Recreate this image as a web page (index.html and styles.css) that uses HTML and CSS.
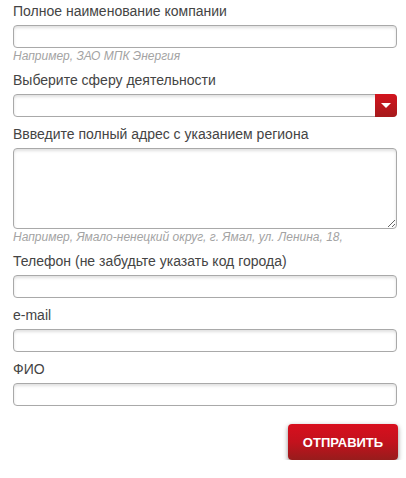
FILE: index.html
```html
<!DOCTYPE html>
<html lang="ru">
<head>
  <meta charset="UTF-8" />
  <title>Заявка</title>
  <link rel="stylesheet" href="styles.css">
</head>
<body>
  <form class="form">
    <div class="field">
      <label class="label">Полное наименование компании</label>
      <input class="input" type="text">
      <div class="hint">Например, ЗАО МПК Энергия</div>
    </div>

    <div class="field">
      <label class="label">Выберите сферу деятельности</label>
      <div class="select">
        <span class="select-arrow"></span>
      </div>
    </div>

    <div class="field">
      <label class="label">Ввведите полный адрес с указанием региона</label>
      <textarea class="input area"></textarea>
      <div class="hint">Например, Ямало-ненецкий округ, г. Ямал, ул. Ленина, 18,</div>
    </div>

    <div class="field">
      <label class="label">Телефон (не забудьте указать код города)</label>
      <input class="input" type="text">
    </div>

    <div class="field">
      <label class="label">e-mail</label>
      <input class="input" type="text">
    </div>

    <div class="field">
      <label class="label">ФИО</label>
      <input class="input" type="text">
    </div>

    <div class="actions">
      <button class="send" type="button">Отправить</button>
    </div>
  </form>
</body>
</html>
```
FILE: styles.css
```css
body {
  margin: 0;
  padding: 3px 9px 0 13px;
  font-family: 'Liberation Sans', Arial, sans-serif;
  background-color: #fff;
  color: #444;
}
.field {
  margin-bottom: 9px;
}
.label {
  display: block;
  font-size: 14px;
  line-height: 16px;
  margin-bottom: 6px;
}
.input,
.select {
  display: block;
  box-sizing: border-box;
  width: 100%;
  height: 23px;
  margin: 0;
  padding: 2px 6px;
  border: 1px solid #a9a9a9;
  border-radius: 4px;
  background-color: #fff;
  box-shadow: inset 0 2px 3px rgba(0, 0, 0, 0.12);
  font-family: inherit;
  font-size: 13px;
}
.area {
  height: 81px;
  resize: vertical;
}
.hint {
  margin-top: 1px;
  font-size: 12px;
  line-height: 14px;
  font-style: italic;
  color: #a3a3a3;
}
.select {
  position: relative;
}
.select-arrow {
  position: absolute;
  top: -1px;
  right: -1px;
  width: 22px;
  height: 23px;
  border-radius: 0 4px 4px 0;
  background: linear-gradient(#d3141e, #a51a1c);
}
.select-arrow::after {
  content: '';
  position: absolute;
  left: 6px;
  top: 9px;
  border-left: 5px solid transparent;
  border-right: 5px solid transparent;
  border-top: 5px solid #fff;
}
.actions {
  display: flex;
  justify-content: flex-end;
  padding-top: 9px;
}
.send {
  width: 110px;
  height: 36px;
  margin-right: -1px;
  border: none;
  border-radius: 4px;
  background: linear-gradient(#d80f1e 0%, #c3121d 50%, #971c1c 100%);
  box-shadow: 0 2px 5px rgba(0, 0, 0, 0.45);
  color: #fff;
  font-family: inherit;
  font-size: 13px;
  font-weight: bold;
  text-transform: uppercase;
  cursor: pointer;
}
```
